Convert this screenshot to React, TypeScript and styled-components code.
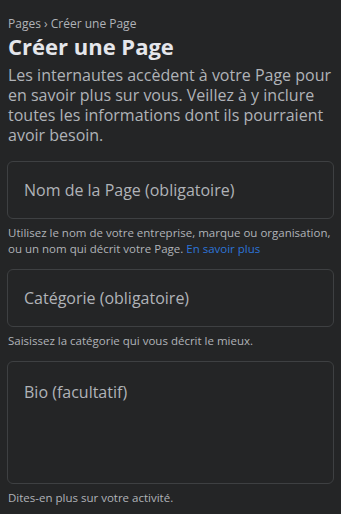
import React from "react";
import styled, { createGlobalStyle } from "styled-components";

const GlobalStyle = createGlobalStyle`
  html, body {
    margin: 0;
    padding: 0;
    background: #242526;
  }
  * {
    box-sizing: border-box;
  }
`;

const Page = styled.div`
  width: 341px;
  min-height: 514px;
  padding: 15px 7px 0 7px;
  background: #242526;
  font-family: "Open Sans", "Noto Sans", sans-serif;
  color: #e4e6eb;
`;

const Breadcrumb = styled.div`
  font-size: 12px;
  line-height: 17px;
  color: #b0b3b8;
  padding-left: 1px;
`;

const Title = styled.h1`
  margin: 0;
  font-size: 22px;
  line-height: 29px;
  font-weight: 700;
  color: #e4e6eb;
  padding-left: 1px;
`;

const Description = styled.p`
  margin: 4px 0 0 0;
  font-size: 16px;
  line-height: 20px;
  color: #b0b3b8;
  padding-left: 1px;
`;

const Form = styled.div`
  display: flex;
  flex-direction: column;
  margin-top: 16px;
`;

const FieldBox = styled.label<{ $tall?: boolean }>`
  display: flex;
  align-items: ${(p) => (p.$tall ? "flex-start" : "center")};
  height: ${(p) => (p.$tall ? "123px" : "58px")};
  padding: ${(p) => (p.$tall ? "19px 16px" : "0 16px")};
  border: 1px solid #3e4042;
  border-radius: 6px;
  background: #242526;
  font-size: 16px;
  color: #b0b3b8;
`;

const Help = styled.div<{ $gap?: number }>`
  font-size: 11.5px;
  line-height: 16px;
  color: #b0b3b8;
  padding: 6px 0 0 1px;
  margin-bottom: ${(p) => p.$gap ?? 12}px;
`;

const Link = styled.a`
  color: #2d74d8;
  text-decoration: none;
`;

export default function App() {
  return (
    <>
      <GlobalStyle />
      <Page>
        <Breadcrumb>Pages › Créer une Page</Breadcrumb>
        <Title>Créer une Page</Title>
        <Description>
          Les internautes accèdent à votre Page pour en savoir plus sur vous.
          Veillez à y inclure toutes les informations dont ils pourraient avoir
          besoin.
        </Description>
        <Form>
          <FieldBox>Nom de la Page (obligatoire)</FieldBox>
          <Help>
            Utilisez le nom de votre entreprise, marque ou organisation, ou un
            nom qui décrit votre Page. <Link href="#">En savoir plus</Link>
          </Help>
          <FieldBox>Catégorie (obligatoire)</FieldBox>
          <Help>Saisissez la catégorie qui vous décrit le mieux.</Help>
          <FieldBox $tall>Bio (facultatif)</FieldBox>
          <Help>Dites-en plus sur votre activité.</Help>
        </Form>
      </Page>
    </>
  );
}
